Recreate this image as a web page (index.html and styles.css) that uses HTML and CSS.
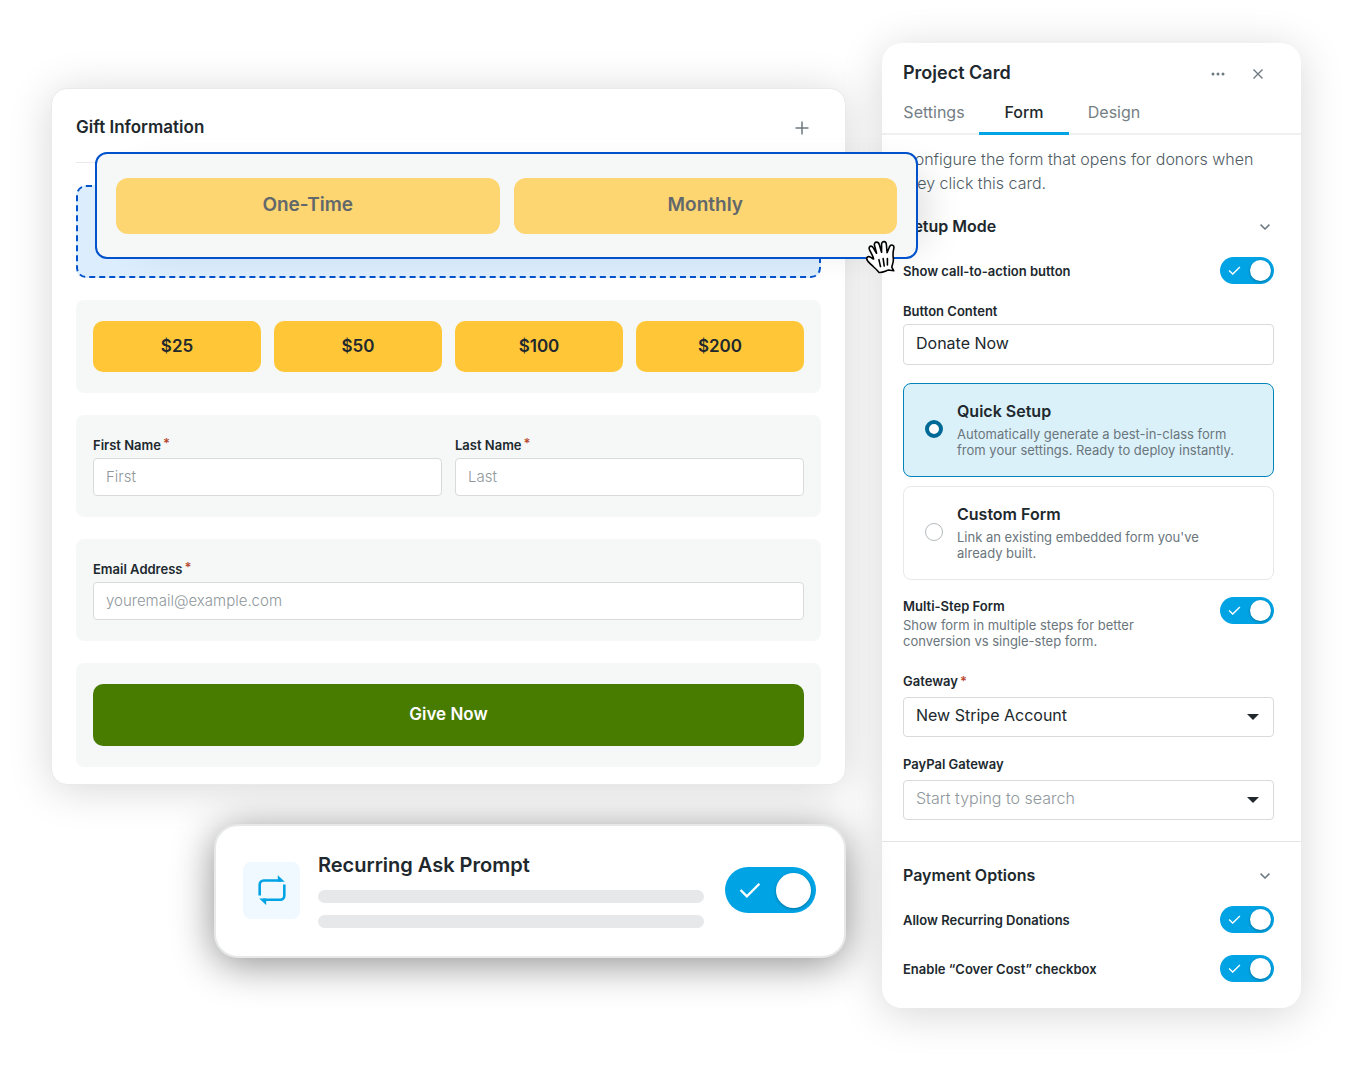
FILE: index.html
```html
<!DOCTYPE html>
<html lang="en">

<head>
    <meta charset="UTF-8">
    <meta name="viewport" content="width=device-width, initial-scale=1.0">
    <title>Project Card - Form Builder</title>
    <link rel="stylesheet" href="styles.css">
</head>

<body>
    <div class="builder">
        <main class="canvas">
            <section class="gift-card">
                <header class="gift-header">
                    <h2>Gift Information</h2>
                    <button class="icon-button" type="button" aria-label="Add block">
                        <svg width="14" height="14" viewBox="0 0 14 14" fill="none" stroke="#6d7a81" stroke-width="1.5">
                            <path d="M7 0.5v13M0.5 7h13" />
                        </svg>
                    </button>
                </header>

                <div class="drop-zone">
                    <div class="dragging">
                        <button class="frequency" type="button">One-Time</button>
                        <button class="frequency" type="button">Monthly</button>
                        <svg class="hand" width="31" height="34" viewBox="0 0 28 32" fill="#fff" stroke="#000" stroke-width="1.5" stroke-linejoin="round" stroke-linecap="round">
                            <path d="M12.500 30.500C10.500 27.500 7.500 25.500 5 23C3 21 1.200 19.500 1 17.500C1 15.800 2.800 15.200 4.300 16C5.500 16.500 6.500 17.500 7.500 17.800C7.300 15.500 5 12 3.600 9C2.800 7 3.800 5.800 5.100 5.800C6.300 5.800 7 6.800 7.600 8L10.300 12.500L8.300 5C8 3.200 8.900 2 10.300 2C11.600 2 12.500 3 12.900 4.500L15 11.500L15 4C15.100 2.300 16.100 1.400 17.400 1.500C18.700 1.600 19.400 2.700 19.500 4L20.200 12L22.500 6.300C23.100 5 24.200 4.300 25.400 4.900C26.700 5.500 26.800 6.800 26.500 8C25.800 11 25.500 13.500 26 17C26.600 20.500 25.200 23 24.600 25.500L26.500 29L21.500 28.300C19 29 15.500 31 12.500 30.500Z" />
                            <path d="M12.500 18.500l1.500 6.500M16.500 17.500l1 7M20.500 17.500v6" />
                        </svg>
                    </div>
                </div>

                <div class="block amounts">
                    <button class="amount" type="button">$25</button>
                    <button class="amount" type="button">$50</button>
                    <button class="amount" type="button">$100</button>
                    <button class="amount" type="button">$200</button>
                </div>

                <div class="block names">
                    <div class="field">
                        <label for="firstName">First Name<span class="required raised">*</span></label>
                        <input type="text" id="firstName" placeholder="First">
                    </div>
                    <div class="field">
                        <label for="lastName">Last Name<span class="required raised">*</span></label>
                        <input type="text" id="lastName" placeholder="Last">
                    </div>
                </div>

                <div class="block">
                    <div class="field">
                        <label for="email">Email Address<span class="required raised">*</span></label>
                        <input type="email" id="email" placeholder="youremail@example.com">
                    </div>
                </div>

                <div class="block">
                    <button class="give-button" type="button">Give Now</button>
                </div>
            </section>

            <section class="prompt-card">
                <div class="prompt-icon">
                    <svg width="30" height="30" viewBox="0 0 30 30" fill="none" stroke="#00a3e4" stroke-width="2.6">
                        <path d="M2.700 20.500V9.500a4 4 0 0 1 4-4H24M27.300 9.500V20.800a4 4 0 0 1-4 4H6" />
                        <path d="M20.800 0.200l7 6.600h-7zM9.200 30.100l-7-6.600h7z" fill="#00a3e4" stroke="none" />
                    </svg>
                </div>
                <div class="prompt-text">
                    <label for="askPrompt">Recurring Ask Prompt</label>
                    <div class="line"></div>
                    <div class="line"></div>
                </div>
                <span class="toggle large">
                    <input type="checkbox" id="askPrompt" checked>
                    <svg viewBox="0 0 14 10"><path d="M1 5l4 4 8-8" /></svg>
                </span>
            </section>
        </main>

        <aside class="panel">
            <header class="panel-header">
                <h1>Project Card</h1>
                <button class="icon-button" type="button" aria-label="More">
                    <svg width="14" height="4" viewBox="0 0 14 4" fill="#6d7a81">
                        <circle cx="2" cy="2" r="1.500" />
                        <circle cx="7" cy="2" r="1.500" />
                        <circle cx="12" cy="2" r="1.500" />
                    </svg>
                </button>
                <button class="icon-button" type="button" aria-label="Close">
                    <svg width="10" height="10" viewBox="0 0 10 10" fill="none" stroke="#6d7a81" stroke-width="1.4">
                        <path d="M0.500 0.500l9 9M9.500 0.500l-9 9" />
                    </svg>
                </button>
            </header>

            <nav class="tabs">
                <a href="#settings">Settings</a>
                <a href="#form" class="active">Form</a>
                <a href="#design">Design</a>
            </nav>

            <div class="panel-section">
                <p class="intro">Configure the form that opens for donors when they click this card.</p>

                <div class="section-title">
                    <h3>Setup Mode</h3>
                    <button class="icon-button" type="button" aria-label="Collapse Setup Mode">
                        <svg width="10" height="6" viewBox="0 0 10 6" fill="none" stroke="#6d7a81" stroke-width="1.500"><path d="M0.600 0.600L5 5l4.400-4.400" /></svg>
                    </button>
                </div>

                <div class="toggle-row">
                    <label for="showCta">Show call-to-action button</label>
                    <span class="toggle">
                        <input type="checkbox" id="showCta" checked>
                        <svg viewBox="0 0 14 10"><path d="M1 5l4 4 8-8" /></svg>
                    </span>
                </div>

                <div class="field">
                    <label for="buttonContent">Button Content</label>
                    <input type="text" id="buttonContent" value="Donate Now">
                </div>

                <div class="modes">
                    <label class="mode selected">
                        <input type="radio" name="mode" checked>
                        <span class="mode-text">
                            <strong>Quick Setup</strong>
                            <small>Automatically generate a best-in-class form from your settings. Ready to deploy instantly.</small>
                        </span>
                    </label>
                    <label class="mode">
                        <input type="radio" name="mode">
                        <span class="mode-text">
                            <strong>Custom Form</strong>
                            <small>Link an existing embedded form you've already built.</small>
                        </span>
                    </label>
                </div>

                <div class="toggle-row multi-step">
                    <label for="multiStep">Multi-Step Form
                        <small>Show form in multiple steps for better conversion vs single-step form.</small>
                    </label>
                    <span class="toggle">
                        <input type="checkbox" id="multiStep" checked>
                        <svg viewBox="0 0 14 10"><path d="M1 5l4 4 8-8" /></svg>
                    </span>
                </div>

                <div class="field select-field">
                    <label for="gateway">Gateway<span class="required">*</span></label>
                    <div class="select">
                        <select id="gateway">
                            <option>New Stripe Account</option>
                        </select>
                    </div>
                </div>
                <div class="field select-field">
                    <label for="paypal">PayPal Gateway</label>
                    <div class="select">
                        <select id="paypal" class="empty">
                            <option>Start typing to search</option>
                        </select>
                    </div>
                </div>
            </div>

            <div class="panel-section payment">
                <div class="section-title">
                    <h3>Payment Options</h3>
                    <button class="icon-button" type="button" aria-label="Collapse Payment Options">
                        <svg width="10" height="6" viewBox="0 0 10 6" fill="none" stroke="#6d7a81" stroke-width="1.500"><path d="M0.600 0.600L5 5l4.400-4.400" /></svg>
                    </button>
                </div>
                <div class="toggle-row">
                    <label for="allowRecurring">Allow Recurring Donations</label>
                    <span class="toggle">
                        <input type="checkbox" id="allowRecurring" checked>
                        <svg viewBox="0 0 14 10"><path d="M1 5l4 4 8-8" /></svg>
                    </span>
                </div>
                <div class="toggle-row">
                    <label for="coverCost">Enable “Cover Cost” checkbox</label>
                    <span class="toggle">
                        <input type="checkbox" id="coverCost" checked>
                        <svg viewBox="0 0 14 10"><path d="M1 5l4 4 8-8" /></svg>
                    </span>
                </div>
            </div>
        </aside>
    </div>
</body>

</html>
```

FILE: styles.css
```css
* {
    margin: 0;
    padding: 0;
    box-sizing: border-box;
}

body {
    font-family: 'Inter', sans-serif;
    font-size: 16px;
    line-height: 24px;
    background-color: #fff;
    color: #20282d;
}

button,
input,
select {
    font: inherit;
    color: inherit;
}

button {
    border: none;
    cursor: pointer;
}

.builder {
    display: grid;
    grid-template-columns: minmax(0, 1fr) 419px;
    gap: 36px;
    align-items: start;
    padding: 43px 51px 60px;
}

.canvas {
    position: relative;
    z-index: 1;
    padding-top: 45px;
}

/* Gift form */
.gift-card {
    position: relative;
    z-index: 1;
    display: flex;
    flex-direction: column;
    gap: 22px;
    padding: 0 24px 17px;
    background-color: #fff;
    border: 1px solid #e9eaeb;
    border-radius: 16px;
    box-shadow: 0 4px 44px rgba(0, 0, 0, 0.16);
}

.gift-header {
    display: flex;
    justify-content: space-between;
    align-items: center;
    height: 74px;
    padding: 3px 12px 0 0;
    border-bottom: 1px solid #e9eaeb;
}

h1 {
    font-size: 18px;
    font-weight: 600;
}

h2,
h3 {
    font-size: 16px;
    font-weight: 600;
}

.gift-header h2 {
    font-size: 17px;
}

.icon-button {
    display: flex;
    padding-top: 2px;
    background: none;
}

.drop-zone {
    position: relative;
    height: 93px;
    background-color: #dceefe;
    border: 2px dashed #0052cc;
    border-radius: 10px;
}

.dragging {
    position: absolute;
    top: -35px;
    left: 17px;
    right: -99px;
    display: grid;
    grid-template-columns: 1fr 1fr;
    gap: 14px;
    padding: 24px 19px 23px;
    background-color: #f6f8f8;
    border: 2px solid #0052cc;
    border-radius: 12px;
    box-shadow: 24px 4px 40px -20px rgba(0, 0, 0, 0.16);
}

.frequency {
    height: 56px;
    padding-bottom: 2px;
    background-color: #fdd571;
    border-radius: 12px;
    color: #62686b;
    font-size: 19px;
    font-weight: 600;
}

.hand {
    position: absolute;
    right: 20px;
    bottom: -17px;
}

.block {
    padding: 21px 17px;
    background-color: #f6f8f8;
    border-radius: 8px;
}

.amounts {
    display: grid;
    grid-template-columns: repeat(4, 1fr);
    gap: 13px;
}

.amount {
    height: 51px;
    padding-bottom: 2px;
    background-color: #ffc638;
    border-radius: 10px;
    font-size: 17px;
    font-weight: 600;
}

.names {
    display: grid;
    grid-template-columns: 1fr 1fr;
    gap: 13px;
}

.field {
    display: flex;
    flex-direction: column;
    gap: 4px;
}

.field label,
.toggle-row label {
    font-size: 13px;
    font-weight: 600;
    line-height: 18px;
}

.required {
    padding-left: 2px;
    color: #b8492f;
}

.raised {
    vertical-align: 2px;
    line-height: 1;
}

.field input {
    height: 38px;
    padding: 0 12px 2px;
    background-color: #fff;
    border: 1px solid #d8dadc;
    border-radius: 4px;
    font-size: 15px;
}

.field input::placeholder {
    color: #8f989d;
    font-weight: 300;
}

.give-button {
    display: block;
    width: 100%;
    height: 62px;
    padding-bottom: 2px;
    background-color: #487c00;
    border-radius: 10px;
    color: #fff;
    font-size: 17px;
    font-weight: 600;
}

/* Recurring prompt */
.prompt-card {
    display: flex;
    align-items: center;
    margin: 39px 0 0 163px;
    padding: 26px 28px 28px 27px;
    background-color: #fff;
    border: 2px solid #e7e8e9;
    border-radius: 24px;
    box-shadow: 0 6px 40px rgba(0, 0, 0, 0.45);
}

.prompt-icon {
    display: flex;
    align-items: center;
    justify-content: center;
    width: 57px;
    height: 57px;
    background-color: #f0f9ff;
    border-radius: 8px;
}

.prompt-text {
    flex: 1;
    display: flex;
    flex-direction: column;
    gap: 12px;
    margin: 0 21px 0 18px;
}

.prompt-text label {
    font-size: 20px;
    font-weight: 600;
    line-height: 26px;
}

.line {
    height: 13px;
    background-color: #e6e8ea;
    border-radius: 7px;
}

/* Toggles */
.toggle {
    position: relative;
    flex-shrink: 0;
    width: 54px;
    height: 27px;
}

.toggle input {
    appearance: none;
    display: block;
    width: 100%;
    height: 100%;
    background-color: #00a3e4;
    border-radius: 23px;
    cursor: pointer;
}

.toggle::after {
    content: '';
    position: absolute;
    top: 3px;
    right: 3px;
    width: 21px;
    height: 21px;
    background-color: #fff;
    border-radius: 50%;
    box-shadow: 0 1px 3px rgba(0, 0, 0, 0.3);
    pointer-events: none;
}

.toggle svg {
    position: absolute;
    top: 9px;
    left: 8px;
    width: 13px;
    height: 9px;
    fill: none;
    stroke: #fff;
    stroke-width: 1.5;
    pointer-events: none;
}

.toggle.large {
    width: 91px;
    height: 46px;
}

.toggle.large::after {
    top: 6px;
    right: 5px;
    width: 35px;
    height: 35px;
}

.toggle.large svg {
    top: 15px;
    left: 14px;
    width: 22px;
    height: 16px;
}

/* Settings panel */
.panel {
    background-color: #fff;
    border-radius: 20px;
    box-shadow: 0 6px 44px rgba(0, 0, 0, 0.16);
}

.panel-header {
    display: flex;
    align-items: center;
    gap: 28px;
    height: 49px;
    padding: 10px 38px 0 21px;
}

.panel-header h1 {
    flex: 1;
}

.tabs {
    display: flex;
    padding-left: 7px;
    box-shadow: inset 0 -2px #eff0f1;
}

.tabs a {
    width: 90px;
    height: 43px;
    border-bottom: 3px solid transparent;
    color: #747e84;
    line-height: 40px;
    text-align: center;
    text-decoration: none;
}

.tabs .active {
    border-color: #00a3e4;
    color: #20282d;
    font-weight: 500;
}

.panel-section {
    padding: 12px 27px 21px 21px;
}

.intro {
    color: #4f5c64;
    font-weight: 300;
}

.section-title {
    display: flex;
    justify-content: space-between;
    align-items: center;
    margin: 19px 0;
    padding-right: 4px;
}

.toggle-row {
    display: flex;
    justify-content: space-between;
    align-items: center;
    margin-bottom: 18px;
}

.panel .field input {
    height: 41px;
    padding-bottom: 4px;
    font-size: 16px;
}

.modes {
    display: flex;
    flex-direction: column;
    gap: 9px;
    margin: 18px 0 17px;
}

.mode {
    display: flex;
    align-items: center;
    gap: 14px;
    padding: 16px 26px 18px 21px;
    border: 1px solid #e7e8e9;
    border-radius: 8px;
    cursor: pointer;
}

.mode.selected {
    background-color: #dbf1fa;
    border-color: #0084b8;
}

.mode input {
    appearance: none;
    flex-shrink: 0;
    width: 18px;
    height: 18px;
    background-color: #fff;
    border: 1px solid #b4b9bc;
    border-radius: 50%;
}

.mode input:checked {
    border: 4px solid #006a97;
}

.mode-text,
.mode-text strong,
small {
    display: block;
}

.mode-text strong {
    margin-bottom: 4px;
    font-weight: 600;
    line-height: 22px;
}

small {
    color: #6a757c;
    font-size: 13px;
    font-weight: 400;
    line-height: 16px;
}

.multi-step {
    align-items: flex-start;
    margin-bottom: 23px;
}

.multi-step small {
    max-width: 260px;
    margin-top: 2px;
}

.select-field {
    gap: 7px;
}

.select-field + .select-field {
    margin-top: 18px;
}

.select {
    position: relative;
}

.select select {
    appearance: none;
    display: block;
    width: 100%;
    height: 40px;
    padding: 0 36px 4px 12px;
    background-color: #fff;
    border: 1px solid #d8dadc;
    border-radius: 4px;
}

.select .empty {
    color: #8f989d;
    font-weight: 300;
}

.select::after {
    content: '';
    position: absolute;
    top: 17px;
    right: 15px;
    border: 6px solid transparent;
    border-top-color: #20282d;
    border-bottom: none;
    pointer-events: none;
}

.payment {
    padding: 21px 27px 26px 21px;
    border-top: 1px solid #e3e5e6;
}

.payment .section-title {
    margin-top: 0;
}

.payment .toggle-row {
    margin-bottom: 0;
}

.payment .toggle-row + .toggle-row {
    margin-top: 22px;
}
```
